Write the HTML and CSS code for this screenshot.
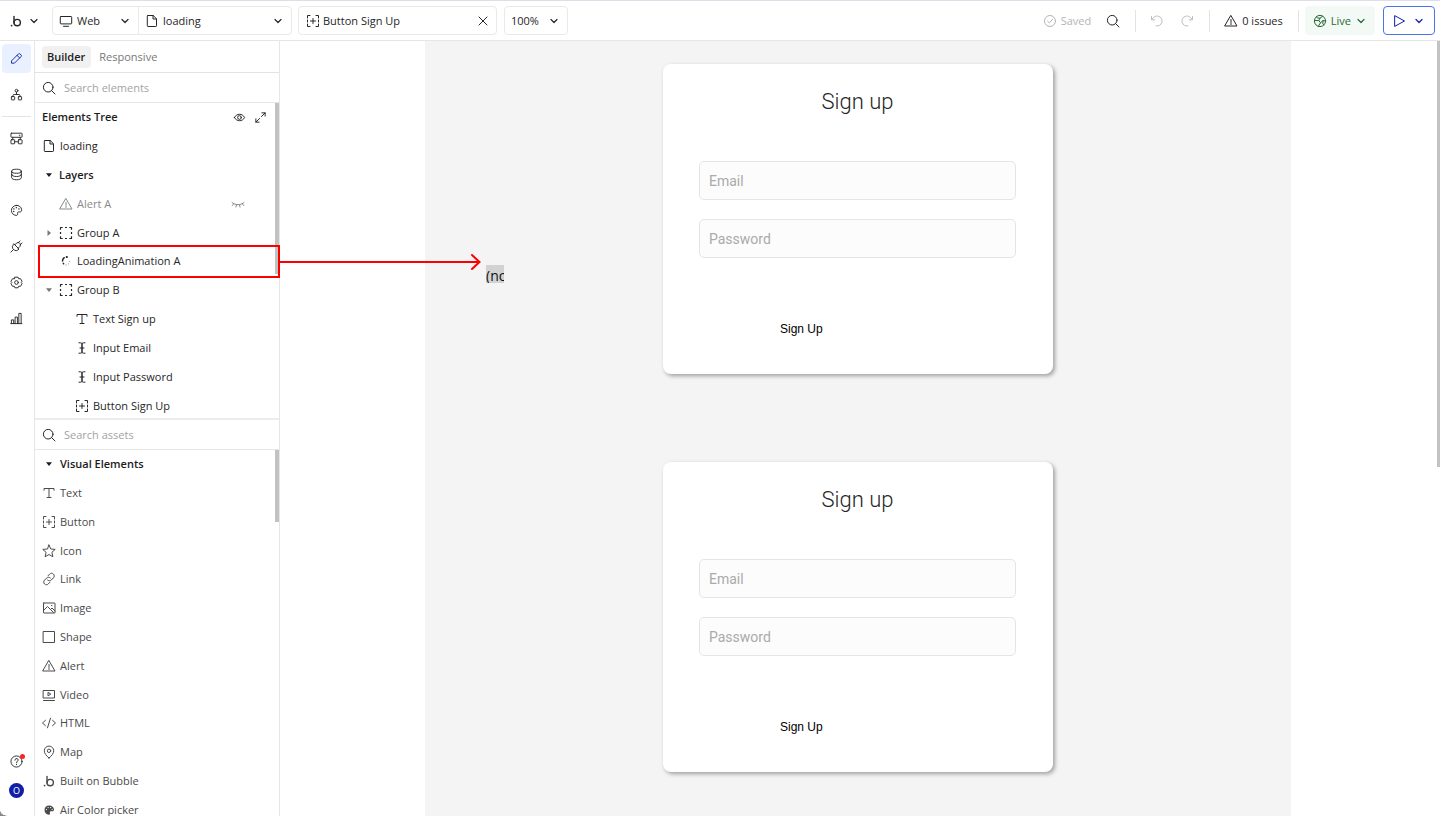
FILE: index.html
```html
<!DOCTYPE html>
<html lang="en">
<head>
<meta charset="utf-8">
<title>Bubble editor - loading</title>
<link rel="stylesheet" href="styles.css">
</head>
<body>
<svg class="sprite" aria-hidden="true">
  <symbol id="chevron" viewBox="0 0 8 8"><path d="M1 2.500 4 5.500 7 2.500"/></symbol>
  <symbol id="bubble" viewBox="0 0 14 14"><path d="M5 2.500V9" stroke-width="1.400"/><circle cx="8.200" cy="8.600" r="3.200" stroke-width="1.400"/><circle cx="2.600" cy="11.600" r=".9" fill="currentColor" stroke="none"/></symbol>
  <symbol id="monitor" viewBox="0 0 14 14"><path d="M2 2.500h10q.7 0 .7.7v6q0 .7-.7.7H2q-.7 0-.7-.7v-6q0-.7.7-.7zM4.500 12.300h5"/></symbol>
  <symbol id="file" viewBox="0 0 14 14"><path d="M3 1.500h5.200l3.300 3.300v7q0 .7-.7.7H3q-.7 0-.7-.7V2.200q0-.7.7-.7zM8 1.500v3.500h3.500"/></symbol>
  <symbol id="button" viewBox="0 0 14 14"><path d="M1.500 4V1.500H4M10 1.500h2.500V4M12.500 10v2.500H10M4 12.500H1.500V10M1.500 6v2M12.500 6v2M7 4.500v5M4.500 7h5"/></symbol>
  <symbol id="close" viewBox="0 0 14 14"><path d="m3 3 8 8M11 3l-8 8"/></symbol>
  <symbol id="search" viewBox="0 0 14 14"><circle cx="6.200" cy="6.200" r="4.800"/><path d="m9.700 9.700 3.300 3.300"/></symbol>
  <symbol id="saved" viewBox="0 0 14 14"><circle cx="7" cy="7" r="5.500"/><path d="m4.600 7.200 1.700 1.700 3.300-3.600"/></symbol>
  <symbol id="undo" viewBox="0 0 14 14"><path d="M1.500 2.500v3.300h3.300M1.800 5.600C3.200 2.800 6 1.500 8.500 2.300c2.600.8 4 3.300 3.400 5.900-.6 2.600-3.300 4.300-5.900 3.700"/></symbol>
  <symbol id="redo" viewBox="0 0 14 14"><path d="M12.500 2.500v3.300H9.200M12.200 5.600C10.800 2.800 8 1.500 5.500 2.300c-2.600.8-4 3.300-3.400 5.900.6 2.600 3.300 4.300 5.900 3.700"/></symbol>
  <symbol id="alert" viewBox="0 0 14 14"><path d="M7 1.700 13 12H1zM7 5.500v3M7 9.500v1"/></symbol>
  <symbol id="globe" viewBox="0 0 14 14"><circle cx="7" cy="7" r="5.600"/><path d="M3.300 2.800 4.800 4l2.200.2 2.600-2M7 4.200 5.800 6.600 1.500 6.500M5.800 6.600l1.700 2.200-2.200 3.500M7.500 8.800l2.500-2.200 2.500.3M10 6.600l-.2 3.200 1.200 1"/></symbol>
  <symbol id="play" viewBox="0 0 14 14"><path d="M2 1.800 11.500 7 2 12.200z"/></symbol>
  <symbol id="pencil" viewBox="0 0 14 14"><path d="m2 9.200 7.200-7.200q.8-.6 1.500 0l1.300 1.300q.6.700 0 1.500L4.800 12H2zM7.600 3.600l2.800 2.800"/></symbol>
  <symbol id="tree" viewBox="0 0 14 14"><circle cx="7" cy="2.900" r="1.500"/><rect x="1.500" y="9.300" width="3.500" height="3.500" rx=".5"/><rect x="9" y="9.300" width="3.500" height="3.500" rx=".5"/><path d="M7 4.400V7M3.200 9.300V8.200Q3.200 7 4.400 7h5.200q1.200 0 1.200 1.200v1.100"/></symbol>
  <symbol id="blocks" viewBox="0 0 14 14"><rect x="1" y="1.300" width="12" height="4.400" rx=".5"/><rect x="1" y="8.300" width="4" height="4.400" rx=".5"/><rect x="9" y="8.300" width="4" height="4.400" rx=".5"/><path d="M5 10.500h4M10 3.500h.6M3 5.700v2.600M11 5.700v2.600"/></symbol>
  <symbol id="database" viewBox="0 0 14 14"><ellipse cx="7" cy="3.500" rx="5.200" ry="2.200"/><path d="M1.800 3.500v7c0 1.200 2.300 2.200 5.200 2.200s5.200-1 5.200-2.200v-7M1.800 7c0 1.200 2.300 2.200 5.200 2.200s5.200-1 5.200-2.200"/></symbol>
  <symbol id="palette" viewBox="0 0 14 14"><path d="M6.500 1.500c3.300-.3 6 1.800 6 4.800 0 1.600-.7 2.300-2 2.200-1.500-.2-2.700.2-2.300 1.600.3 1.200-.2 2.300-1.600 2.200C3.600 12 1.500 9.700 1.500 6.900c0-2.800 2.200-5.100 5-5.400z"/><path d="M4 5.300h.3M6.700 4h.3M9.500 5.300h.3M3.900 8h.3" stroke-width="1.300"/></symbol>
  <symbol id="plug" viewBox="0 0 14 14"><path d="m4.300 4.300 5.400 5.400-1 1q-2 1.500-4 .3L3 9.300q-1.200-2 .3-4zM5.200 5.200 7.200 3.200q1.500-1 3 0l.6.6q1 1.500 0 3L8.800 8.800M3.700 10.300 1 13M8.800 3l2-2M11 5.200l2-2"/></symbol>
  <symbol id="gear" viewBox="0 0 14 14"><path d="M5.300 1.300h3.400l.7 1.700 1.900-.1 1.700 2.900L12 7l1 1.200-1.700 2.900-1.900-.1-.7 1.700H5.300L4.600 11l-1.900.1L1 8.200 2 7 1 5.800l1.700-2.900 1.900.1z"/><circle cx="7" cy="7" r="2"/></symbol>
  <symbol id="chart" viewBox="0 0 14 14"><path d="M1.500 12.500v-4H4v4M5.500 12.500v-7H8v7M9.500 12.500v-11H12v11M.8 12.500h12"/></symbol>
  <symbol id="help" viewBox="0 0 14 14"><circle cx="7" cy="7" r="6"/><path d="M5.200 5.600c0-2.600 3.900-2.200 3.600 0C8.600 6.700 7 6.700 7 8.200M7 10v.4"/></symbol>
  <symbol id="eye" viewBox="0 0 14 14"><path d="M1.500 7C4 2.300 10 2.300 12.500 7 10 11.700 4 11.700 1.500 7z"/><circle cx="7" cy="7" r="2"/></symbol>
  <symbol id="expand" viewBox="0 0 14 14"><path d="M8.500 2H12v3.500M12 2 8 6M5.500 12H2V8.500M2 12l4-4"/></symbol>
  <symbol id="closed-eye" viewBox="0 0 14 14"><path d="M1 5.500c3 3 9 3 12 0M2.800 6.700l-1.500 1.800M11.200 6.700l1.500 1.800M5.500 7.700 5 10M8.500 7.700 9 10"/></symbol>
  <symbol id="down" viewBox="0 0 8 8"><path d="M1 2.300h6L4 6z" fill="currentColor" stroke="none"/></symbol>
  <symbol id="right" viewBox="0 0 8 8"><path d="M2.500 1v6L6 4z" fill="currentColor" stroke="none"/></symbol>
  <symbol id="group" viewBox="0 0 14 14"><path stroke-linecap="butt" stroke-width="1.200" d="M1.500 3.700V1.500h2.200M10.300 1.500h2.200v2.200M12.500 10.300v2.200h-2.200M3.700 12.500H1.500v-2.200M6 1.500h2M6 12.500h2M1.500 6v2M12.500 6v2"/></symbol>
  <symbol id="loader" viewBox="0 0 14 14"><path d="M5.200 3.700Q3.500 5 3.500 7M4.300 9.400l.3.400" stroke-width="1.500"/><path d="M7 11h.2M9.600 9.900h.1M10.700 7.300v.1" stroke="#888"/><path d="M7.600 3h.4" stroke-width="1.800"/></symbol>
  <symbol id="text" viewBox="0 0 14 14"><path d="M2 4.300V2.500h10v1.800M7 2.500v9M5 11.500h4"/></symbol>
  <symbol id="input" viewBox="0 0 14 14"><path d="M4 1.800h1.500Q7 1.800 7 3v8q0 1.200-1.500 1.200H4M10 1.800H8.500Q7 1.800 7 3v8q0 1.200 1.500 1.200H10M5 7h4"/></symbol>
  <symbol id="star" viewBox="0 0 14 14"><path d="m7 1 1.800 4 4.400.4-3.300 2.900 1 4.500L7 10.500l-3.900 2.300 1-4.500L.8 5.400 5.200 5z"/></symbol>
  <symbol id="link" viewBox="0 0 14 14"><path d="M6 3.800 7.700 2.100c1.200-1.200 2.700-1.100 3.700-.1s1.200 2.700.1 3.800L9.300 8C8.200 9.100 6.600 9 5.600 8M8 10.200l-1.700 1.700c-1.200 1.200-2.700 1.100-3.700.1s-1.200-2.700-.1-3.800L4.700 6C5.800 4.900 7.400 5 8.400 6"/></symbol>
  <symbol id="image" viewBox="0 0 14 14"><rect x="1.500" y="2" width="11.500" height="10" rx=".3"/><path d="m1.500 9.500 4-4 6 6M8.500 8.500 10 7l3 3M9.500 4.500h.4"/></symbol>
  <symbol id="shape" viewBox="0 0 14 14"><rect x="1.500" y="1.500" width="11" height="11"/></symbol>
  <symbol id="video" viewBox="0 0 14 14"><rect x="1.500" y="2.500" width="11" height="7.500"/><path d="M1.500 12.500h11M6 4.700v3.200l2.500-1.600z"/></symbol>
  <symbol id="html" viewBox="0 0 14 14"><path d="M3.500 4.300.5 7l3 2.700M10.500 4.300l3 2.700-3 2.700M8.500 2.200l-3 9.600"/></symbol>
  <symbol id="map" viewBox="0 0 14 14"><path d="M7 13C4 10.500 2.300 8.300 2.300 5.800a4.700 4.700 0 0 1 9.400 0C11.700 8.300 10 10.500 7 13z"/><circle cx="7" cy="5.800" r="1.700"/></symbol>
  <symbol id="paint" viewBox="0 0 14 14"><path d="M7 2.500c3 0 5 1.700 5 4 0 1.600-1.300 2-2.600 1.800-1.200-.1-1.900.5-1.500 1.500.3.900.1 1.900-1 1.900C4.200 11.600 2.500 9.500 2.500 7c0-2.600 1.900-4.500 4.500-4.500z" fill="currentColor" stroke="none"/><path d="M4.300 6.600h.3M6 4.600h.3M8.500 4.600h.3M10 6.400h.3" stroke="#fff"/></symbol>
</svg>

<header class="topbar">
  <button class="plain brand" aria-label="Bubble menu"><svg class="icon"><use href="#bubble"/></svg><svg class="chev"><use href="#chevron"/></svg></button>
  <div class="box pair">
    <label class="picker platform"><svg class="icon"><use href="#monitor"/></svg><select aria-label="Platform"><option>Web</option></select><svg class="chev"><use href="#chevron"/></svg></label>
    <label class="picker page-pick"><svg class="icon"><use href="#file"/></svg><select aria-label="Page"><option>loading</option></select><svg class="chev"><use href="#chevron"/></svg></label>
  </div>
  <div class="box element"><svg class="icon"><use href="#button"/></svg><span>Button Sign Up</span><button class="plain" aria-label="Clear selection"><svg class="icon"><use href="#close"/></svg></button></div>
  <label class="box picker zoom"><select aria-label="Zoom"><option>100%</option></select><svg class="chev"><use href="#chevron"/></svg></label>
  <div class="actions">
    <span class="saved"><svg class="icon"><use href="#saved"/></svg>Saved</span>
    <button class="plain find" aria-label="Search"><svg class="icon"><use href="#search"/></svg></button>
    <span class="rule"></span>
    <div class="history"><button class="plain" aria-label="Undo" disabled><svg class="icon"><use href="#undo"/></svg></button><button class="plain" aria-label="Redo" disabled><svg class="icon"><use href="#redo"/></svg></button></div>
    <span class="rule"></span>
    <button class="plain issues"><svg class="icon"><use href="#alert"/></svg>0 issues</button>
    <span class="rule"></span>
    <button class="live"><svg class="icon"><use href="#globe"/></svg>Live<svg class="chev"><use href="#chevron"/></svg></button>
    <button class="preview" aria-label="Preview"><svg class="icon"><use href="#play"/></svg><svg class="chev"><use href="#chevron"/></svg></button>
  </div>
</header>

<div class="workspace">
  <nav class="rail" aria-label="Editor sections">
    <button class="active" aria-label="Design"><svg class="icon"><use href="#pencil"/></svg></button>
    <button aria-label="Workflow"><svg class="icon"><use href="#tree"/></svg></button>
    <hr>
    <button aria-label="Components"><svg class="icon"><use href="#blocks"/></svg></button>
    <button aria-label="Data"><svg class="icon"><use href="#database"/></svg></button>
    <button aria-label="Styles"><svg class="icon"><use href="#palette"/></svg></button>
    <button aria-label="Plugins"><svg class="icon"><use href="#plug"/></svg></button>
    <button aria-label="Settings"><svg class="icon"><use href="#gear"/></svg></button>
    <button aria-label="Logs"><svg class="icon"><use href="#chart"/></svg></button>
    <div class="account">
      <button class="help" aria-label="Help"><svg class="icon"><use href="#help"/></svg><i class="dot"></i></button>
      <button class="avatar">O</button>
    </div>
  </nav>

  <aside class="sidebar">
    <div class="tabs"><button class="selected">Builder</button><button>Responsive</button></div>
    <label class="search"><svg class="icon"><use href="#search"/></svg><input type="search" placeholder="Search elements" aria-label="Search elements"></label>
    <section class="panel tree-panel">
      <ul class="rows tree">
        <li class="heading"><span>Elements Tree</span><svg class="icon"><use href="#eye"/></svg><svg class="icon"><use href="#expand"/></svg></li>
        <li class="root"><svg class="icon"><use href="#file"/></svg>loading</li>
        <li class="section"><svg class="caret"><use href="#down"/></svg>Layers</li>
        <li class="child muted"><i class="caret"></i><svg class="icon"><use href="#alert"/></svg><span>Alert A</span><svg class="icon"><use href="#closed-eye"/></svg></li>
        <li class="child"><svg class="caret"><use href="#right"/></svg><svg class="icon"><use href="#group"/></svg>Group A</li>
        <li class="child"><i class="caret"></i><svg class="icon"><use href="#loader"/></svg>LoadingAnimation A</li>
        <li class="child"><svg class="caret"><use href="#down"/></svg><svg class="icon"><use href="#group"/></svg>Group B</li>
        <li class="leaf"><svg class="icon"><use href="#text"/></svg>Text Sign up</li>
        <li class="leaf"><svg class="icon"><use href="#input"/></svg>Input Email</li>
        <li class="leaf"><svg class="icon"><use href="#input"/></svg>Input Password</li>
        <li class="leaf"><svg class="icon"><use href="#button"/></svg>Button Sign Up</li>
      </ul>
      <i class="thumb"></i>
    </section>
    <label class="search"><svg class="icon"><use href="#search"/></svg><input type="search" placeholder="Search assets" aria-label="Search assets"></label>
    <section class="panel asset-panel">
      <ul class="rows assets">
        <li class="section"><svg class="caret"><use href="#down"/></svg>Visual Elements</li>
        <li><svg class="icon"><use href="#text"/></svg>Text</li>
        <li><svg class="icon"><use href="#button"/></svg>Button</li>
        <li><svg class="icon"><use href="#star"/></svg>Icon</li>
        <li><svg class="icon"><use href="#link"/></svg>Link</li>
        <li><svg class="icon"><use href="#image"/></svg>Image</li>
        <li><svg class="icon"><use href="#shape"/></svg>Shape</li>
        <li><svg class="icon"><use href="#alert"/></svg>Alert</li>
        <li><svg class="icon"><use href="#video"/></svg>Video</li>
        <li><svg class="icon"><use href="#html"/></svg>HTML</li>
        <li><svg class="icon"><use href="#map"/></svg>Map</li>
        <li><svg class="icon"><use href="#bubble"/></svg>Built on Bubble</li>
        <li><svg class="icon"><use href="#paint"/></svg>Air Color picker</li>
      </ul>
      <i class="thumb"></i>
    </section>
  </aside>

  <main class="canvas">
    <div class="artboard">
      <span class="loading-element">(no</span>
      <form class="card">
        <h2>Sign up</h2>
        <input type="email" placeholder="Email" aria-label="Email">
        <input type="password" placeholder="Password" aria-label="Password">
        <button type="button">Sign Up</button>
      </form>
      <form class="card">
        <h2>Sign up</h2>
        <input type="email" placeholder="Email" aria-label="Email">
        <input type="password" placeholder="Password" aria-label="Password">
        <button type="button">Sign Up</button>
      </form>
    </div>
    <i class="thumb"></i>
  </main>
</div>

<svg class="callout" viewBox="0 0 446 34" aria-hidden="true"><rect x="2" y="2" width="240" height="31"/><path d="M243 18h199M435 11l7.500 7-7.500 7"/></svg>
<i class="corner"></i>
</body>
</html>
```

FILE: styles.css
```css
* { box-sizing: border-box; }

body {
  margin: 0;
  height: 100vh;
  display: flex;
  flex-direction: column;
  overflow: hidden;
  position: relative;
  background: #fff;
  color: #262626;
  font: 11px/16px "Open Sans", "Noto Sans", sans-serif;
}

button, input, select { font: inherit; color: inherit; }
button { border: 0; padding: 0; background: none; display: flex; align-items: center; }
svg { fill: none; stroke: currentColor; stroke-linecap: round; stroke-linejoin: round; flex: none; }
.sprite { display: none; }
.icon { width: 14px; height: 14px; }
.chev { width: 8px; height: 8px; stroke-width: 1.2; }

/* Top bar */
.topbar {
  flex: none;
  height: 41px;
  display: flex;
  align-items: center;
  padding: 0 5px 0 9px;
  border-top: 1px solid #dcdfe8;
  border-bottom: 1px solid #e6e6e6;
}
.brand { width: 43px; gap: 7px; }
.box { height: 29px; display: flex; align-items: center; border: 1px solid #e9e9e9; border-radius: 4px; }
.pair { width: 240px; margin-right: 6px; }
.picker { padding: 0 9px 0 6px; }
.pair .picker { height: 100%; display: flex; align-items: center; gap: 4px; }
.platform { width: 86px; border-right: 1px solid #e9e9e9; }
.page-pick { flex: 1; }
.picker select {
  flex: 1;
  min-width: 0;
  appearance: none;
  border: 0;
  padding: 0;
  background: none;
}
.element { width: 199px; padding: 0 6px 0 7px; gap: 3px; margin-right: 7px; }
.element span { flex: 1; }
.zoom { width: 64px; }
.actions { flex: 1; display: flex; align-items: center; justify-content: flex-end; }
.saved { display: flex; align-items: center; gap: 4px; color: #b5b5b5; margin-right: 15px; }
.rule { width: 1px; height: 22px; background: #e3e3e3; }
.find { margin-right: 15px; }
.history { display: flex; gap: 16px; color: #bdbdbd; margin: 0 15px 0 14px; }
.issues { gap: 4px; margin: 0 15px 0 14px; font-weight: 500; }
.live {
  height: 29px;
  gap: 4px;
  padding: 0 10px 0 8px;
  margin: 0 8px 0 6px;
  border-radius: 4px;
  background: #f3f9f5;
  color: #286a34;
}
.live .chev { margin-left: 2px; }
.preview { width: 52px; height: 29px; padding: 0 11px 0 9px; justify-content: space-between; border: 1px solid #4a73e8; border-radius: 4px; color: #101fa6; }

/* Left rail */
.workspace { flex: 1; min-height: 0; display: flex; }
.rail {
  flex: none;
  width: 35px;
  display: flex;
  flex-direction: column;
  padding: 3px 3px 16px 2px;
  border-right: 1px solid #e6e6e6;
}
.rail button { width: 29px; height: 29px; margin-bottom: 7px; justify-content: center; border-radius: 4px; }
.rail .icon { width: 13px; height: 13px; }
.rail .active { background: #e9f0ff; color: #101fa6; }
.rail hr { width: 29px; margin: 0 0 7px; border: 0; border-top: 1px solid #e3e3e3; }
.account { margin-top: auto; }
.rail .help { position: relative; margin: 0; }
.dot { position: absolute; top: 7px; right: 6px; width: 5px; height: 5px; border-radius: 50%; background: #f22; }
.rail .avatar { width: 15px; height: 15px; margin: 7px 7px 2px; border-radius: 50%; background: #101fa6; color: #fff; font-size: 9px; }

/* Sidebar */
.sidebar { flex: none; width: 245px; display: flex; flex-direction: column; border-right: 1px solid #e6e6e6; }
.tabs { height: 32px; display: flex; align-items: center; gap: 3px; padding: 0 7px; border-bottom: 1px solid #e3e3e3; }
.tabs button { height: 22px; padding: 0 6px 0 5px; border-radius: 4px; color: #777; }
.tabs .selected { background: #f1f1f1; color: #1c1c1c; font-weight: 600; }
.search { height: 30px; flex: none; display: flex; align-items: center; gap: 8px; padding: 0 7px; border-bottom: 1px solid #e6e6e6; }
.search input { flex: 1; min-width: 0; height: 16px; border: 0; padding: 0; background: none; outline: 0; }
.search input::placeholder { color: #a3a3a3; opacity: 1; }
.panel { position: relative; overflow: hidden; }
.tree-panel { height: 317px; flex: none; border-bottom: 2px solid #ececec; }
.asset-panel { flex: 1; }
.rows { margin: 0; padding: 0; list-style: none; display: grid; grid-auto-rows: 1fr; }
.tree { height: 317px; }
.assets { height: 374px; color: #4a4a4a; }
.rows li { display: flex; align-items: center; gap: 4px; padding: 0 34px 0 7px; }
.rows .heading { font-weight: 600; color: #1c1c1c; padding-right: 12px; gap: 8px; }
.heading .icon { width: 13px; height: 13px; }
.rows span { flex: 1; }
.caret { width: 8px; height: 8px; flex: none; }
.rows .section { font-weight: 600; color: #1c1c1c; gap: 6px; padding-left: 10px; }
.assets .section .caret { margin-right: 1px; }
.rows .child { padding-left: 10px; gap: 4px; }
.child .caret { margin-right: 2px; color: #777; }
.rows .muted { color: #8a8a8a; }
.rows .leaf { padding-left: 40px; gap: 4px; }
.thumb { position: absolute; top: 0; right: 0; width: 4px; background: #c2c2c2; }
.tree-panel .thumb { height: 171px; }
.asset-panel .thumb { height: 72px; }

/* Canvas */
.canvas { flex: 1; min-width: 0; position: relative; padding: 0 149px 0 145px; overflow: hidden; }
.canvas .thumb { width: 3px; height: 426px; }
.artboard {
  position: relative;
  min-height: 100%;
  display: flex;
  flex-direction: column;
  align-items: center;
  gap: 88px;
  padding-top: 23px;
  background: #f4f4f4;
}
.loading-element {
  position: absolute;
  left: 61px;
  top: 224px;
  width: 18px;
  height: 18px;
  overflow: hidden;
  background: #d2d2d2;
  color: #111;
  font-size: 14px;
  line-height: 22px;
}
.card {
  width: 390px;
  display: flex;
  flex-direction: column;
  padding: 23px 37px 33px 36px;
  border-radius: 8px;
  background: #fff;
  box-shadow: 2px 2px 4px rgba(0, 0, 0, .35);
}
.card h2 { margin: 0 0 44px; text-align: center; font: 300 22px/30px Roboto, sans-serif; }
.card input {
  height: 39px;
  margin-bottom: 19px;
  padding: 0 9px;
  border: 1px solid #e5e5e5;
  border-radius: 5px;
  background: #fcfcfc;
  font: 14px/20px Roboto, sans-serif;
}
.card input::placeholder { color: #aaa; opacity: 1; }
.card button { align-self: flex-start; margin: 40px 0 0 71px; padding: 0 10px; height: 24px; color: #000; font: 12px/16px "Liberation Sans", Arial, sans-serif; }

/* Callout drawn over the editor */
.callout { position: absolute; left: 37px; top: 244px; width: 446px; height: 34px; color: #f00; stroke-width: 2; pointer-events: none; stroke-linejoin: miter; }

/* Rounded window edge */
.corner { position: absolute; left: 0; bottom: 0; width: 8px; height: 5px; background: radial-gradient(ellipse 8px 5px at 100% 0, transparent 90%, #888 100%); }
```
